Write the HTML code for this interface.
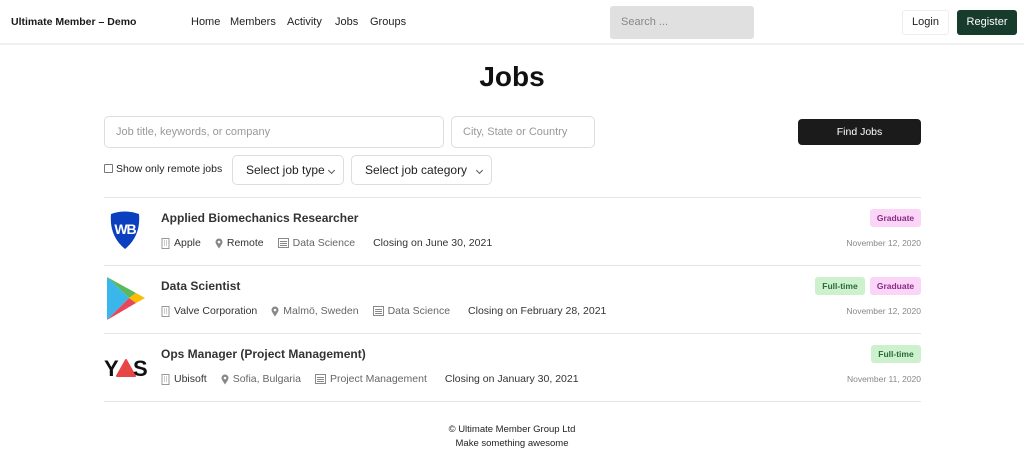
<!DOCTYPE html>
<html><head><meta charset="utf-8"><style>
*{box-sizing:border-box;margin:0;padding:0}
body{width:1024px;height:454px;background:#fff;font-family:"Liberation Sans",sans-serif;color:#1a1a1a;position:relative;overflow:hidden}
.a{position:absolute;white-space:nowrap}
.hdr{position:absolute;left:0;top:0;width:1024px;height:45px;border-bottom:2px solid #f0f0f0}
.nav{font-size:11px;color:#222;top:16px}
.inp{position:absolute;border:1px solid #ddd;border-radius:5px;background:#fff;font-size:11px;color:#999;padding-left:11px;display:flex;align-items:center}
.sel{position:absolute;border:1px solid #ddd;border-radius:5px;background:#fff;font-size:12px;color:#222;padding-left:13px;display:flex;align-items:center}
.sel:after{content:"";position:absolute;right:9px;top:12px;width:4px;height:4px;border-right:1px solid #555;border-bottom:1px solid #555;transform:rotate(45deg)}
.line{position:absolute;left:104px;width:817px;height:1px;background:#e5e5e5}
.t{font-size:12px;font-weight:bold;color:#333;left:161px}
.m{font-size:10.5px;color:#333;display:flex;align-items:center;left:161px}
.m span{display:inline-flex;align-items:center;margin-right:14px}
.m svg{margin-right:4px}
.g{color:#666}
.tag{position:absolute;height:18px;border-radius:3px;font-size:8.5px;font-weight:bold;display:flex;align-items:center;justify-content:center}
.gr{background:#fbd5f8;color:#8a2b83;width:51px}
.ft{background:#cdf0cd;color:#2a6b3a;width:50px}
.d{font-size:8.5px;color:#888;right:103px}
</style></head><body>
<div class="hdr"></div>
<div class="a" style="left:11px;top:16px;font-size:10.5px;font-weight:bold">Ultimate Member – Demo</div>
<div class="a nav" style="left:191px">Home</div>
<div class="a nav" style="left:230px">Members</div>
<div class="a nav" style="left:287px">Activity</div>
<div class="a nav" style="left:335px">Jobs</div>
<div class="a nav" style="left:370px">Groups</div>
<div class="a" style="left:610px;top:6px;width:144px;height:33px;background:#e0e0e0;border-radius:3px;font-size:11px;color:#888;padding:10px 11px">Search ...</div>
<div class="a" style="left:902px;top:10px;width:47px;height:25px;border:1px solid #eee;border-radius:3px;font-size:11px;text-align:center;line-height:23px;color:#222">Login</div>
<div class="a" style="left:957px;top:10px;width:60px;height:25px;background:#173c2c;border-radius:3px;font-size:11px;text-align:center;line-height:25px;color:#fff">Register</div>

<div class="a" style="left:0;width:1024px;text-align:center;top:61px;font-size:28px;font-weight:bold;color:#111">Jobs</div>

<div class="inp" style="left:104px;top:116px;width:340px;height:32px">Job title, keywords, or company</div>
<div class="inp" style="left:451px;top:116px;width:144px;height:32px">City, State or Country</div>
<div class="a" style="left:798px;top:119px;width:123px;height:26px;background:#1b1b1b;border-radius:4px;color:#fff;font-size:10.5px;text-align:center;line-height:26px">Find Jobs</div>

<div class="a" style="left:104px;top:164px;width:9px;height:9px;border:1px solid #777;border-radius:1px"></div>
<div class="a" style="left:116px;top:163px;font-size:10.5px;color:#222">Show only remote jobs</div>
<div class="sel" style="left:232px;top:155px;width:112px;height:30px">Select job type</div>
<div class="sel" style="left:351px;top:155px;width:141px;height:30px">Select job category</div>

<div class="line" style="top:197px"></div>
<div class="line" style="top:265px"></div>
<div class="line" style="top:333px"></div>
<div class="line" style="top:401px"></div>

<!-- logos -->
<svg class="a" style="left:109px;top:210px" width="32" height="40" viewBox="0 0 32 40"><path d="M2 4 Q16 -1 30 4 Q32 26 16 39 Q0 26 2 4Z" fill="#0b3fbf"/><text x="16" y="24" text-anchor="middle" font-size="14" font-weight="bold" fill="#fff" font-family="Liberation Sans" letter-spacing="-1">WB</text></svg>
<svg class="a" style="left:106px;top:276px" width="40" height="45" viewBox="0 0 40 45"><path d="M1 1 L23 22 L1 44Z" fill="#3ab7ea"/><path d="M1 1 L30 17 L23 22Z" fill="#5cb85c"/><path d="M23 22 L30 17 L39 22 L30 27Z" fill="#fbbc05"/><path d="M1 44 L23 22 L30 27Z" fill="#e8475a"/></svg>
<svg class="a" style="left:104px;top:355px" width="44" height="24" viewBox="0 0 44 24"><text x="0" y="21" font-size="22" font-weight="bold" fill="#111" font-family="Liberation Sans" letter-spacing="-1">Y</text><path d="M13 21 L22 5 L31 21Z" fill="#e84545" stroke="#e84545" stroke-width="2" stroke-linejoin="round"/><text x="29" y="21" font-size="22" font-weight="bold" fill="#111" font-family="Liberation Sans">S</text></svg>

<!-- row 1 -->
<div class="a t" style="top:211px">Applied Biomechanics Researcher</div>
<div class="a m" style="top:237px">
<span><svg width="9" height="11"><rect x="1" y="0.5" width="7" height="10" fill="none" stroke="#999"/><path d="M3 3h1M5 3h1M3 5h1M5 5h1M3 7h1M5 7h1" stroke="#999"/></svg>Apple</span>
<span><svg width="8" height="11"><path d="M4 10.5 C1 6 0.5 5 0.5 4 a3.5 3.5 0 0 1 7 0 c0 1 -0.5 2 -3.5 6.5Z" fill="#888"/><circle cx="4" cy="4" r="1.3" fill="#fff"/></svg>Remote</span>
<span class="g"><svg width="11" height="10"><rect x="0.5" y="0.5" width="10" height="9" fill="none" stroke="#888"/><path d="M2 3.5h7M2 5.5h7M2 7.5h7" stroke="#888"/></svg>Data Science</span>
<span style="margin-left:4px">Closing on June 30, 2021</span></div>
<div class="tag gr" style="left:870px;top:209px">Graduate</div>
<div class="a d" style="top:238px">November 12, 2020</div>

<!-- row 2 -->
<div class="a t" style="top:279px">Data Scientist</div>
<div class="a m" style="top:305px">
<span><svg width="9" height="11"><rect x="1" y="0.5" width="7" height="10" fill="none" stroke="#999"/><path d="M3 3h1M5 3h1M3 5h1M5 5h1M3 7h1M5 7h1" stroke="#999"/></svg>Valve Corporation</span>
<span class="g"><svg width="8" height="11"><path d="M4 10.5 C1 6 0.5 5 0.5 4 a3.5 3.5 0 0 1 7 0 c0 1 -0.5 2 -3.5 6.5Z" fill="#888"/><circle cx="4" cy="4" r="1.3" fill="#fff"/></svg>Malmö, Sweden</span>
<span class="g"><svg width="11" height="10"><rect x="0.5" y="0.5" width="10" height="9" fill="none" stroke="#888"/><path d="M2 3.5h7M2 5.5h7M2 7.5h7" stroke="#888"/></svg>Data Science</span>
<span style="margin-left:4px">Closing on February 28, 2021</span></div>
<div class="tag ft" style="left:815px;top:277px">Full-time</div>
<div class="tag gr" style="left:870px;top:277px">Graduate</div>
<div class="a d" style="top:306px">November 12, 2020</div>

<!-- row 3 -->
<div class="a t" style="top:347px">Ops Manager (Project Management)</div>
<div class="a m" style="top:373px">
<span><svg width="9" height="11"><rect x="1" y="0.5" width="7" height="10" fill="none" stroke="#999"/><path d="M3 3h1M5 3h1M3 5h1M5 5h1M3 7h1M5 7h1" stroke="#999"/></svg>Ubisoft</span>
<span class="g"><svg width="8" height="11"><path d="M4 10.5 C1 6 0.5 5 0.5 4 a3.5 3.5 0 0 1 7 0 c0 1 -0.5 2 -3.5 6.5Z" fill="#888"/><circle cx="4" cy="4" r="1.3" fill="#fff"/></svg>Sofia, Bulgaria</span>
<span class="g"><svg width="11" height="10"><rect x="0.5" y="0.5" width="10" height="9" fill="none" stroke="#888"/><path d="M2 3.5h7M2 5.5h7M2 7.5h7" stroke="#888"/></svg>Project Management</span>
<span style="margin-left:4px">Closing on January 30, 2021</span></div>
<div class="tag ft" style="left:871px;top:345px">Full-time</div>
<div class="a d" style="top:374px">November 11, 2020</div>

<div class="a" style="left:0;width:1024px;text-align:center;top:423px;font-size:9.5px;color:#222;line-height:14px">© Ultimate Member Group Ltd<br>Make something awesome</div>
</body></html>
